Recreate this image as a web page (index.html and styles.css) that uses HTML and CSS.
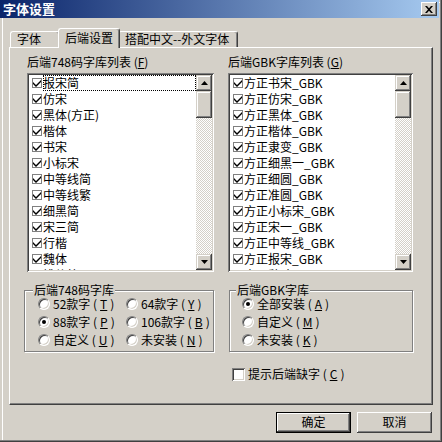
FILE: index.html
```html
<!DOCTYPE html>
<html lang="zh-CN">
<head>
  <meta charset="UTF-8" />
  <title>字体设置</title>
  <link rel="stylesheet" href="styles.css">
</head>
<body>
  <div class="window">
    <div class="titlebar">
      <span class="title">字体设置</span>
      <span class="close">
        <svg width="8" height="7" viewBox="0 0 8 7"><path d="M0 0h2l2 2.2L6 0h2L5 3.5 8 7H6L4 4.8 2 7H0l3-3.5z" fill="#000"/></svg>
      </span>
    </div>

    <div class="body">
      <div class="tabs">
        <div class="tab tab-font">字体</div>
        <div class="tab tab-back active">后端设置</div>
        <div class="tab tab-mix">搭配中文--外文字体</div>
      </div>

      <div class="panel">
        <div class="lists">
          <div class="col col-left">
            <div class="label">后端748码字库列表 (<u>F</u>)</div>
            <div class="listbox">
              <div class="items">
                <div class="item focus"><span class="cb"><svg width="8" height="8" viewBox="0 0 8 8"><path d="M0 3l3 3 5-5v2L3 8 0 5z" fill="#000"/></svg></span><span class="txt">报宋简</span></div>
                <div class="item"><span class="cb"><svg width="8" height="8" viewBox="0 0 8 8"><path d="M0 3l3 3 5-5v2L3 8 0 5z" fill="#000"/></svg></span><span class="txt">仿宋</span></div>
                <div class="item"><span class="cb"><svg width="8" height="8" viewBox="0 0 8 8"><path d="M0 3l3 3 5-5v2L3 8 0 5z" fill="#000"/></svg></span><span class="txt">黑体(方正)</span></div>
                <div class="item"><span class="cb"><svg width="8" height="8" viewBox="0 0 8 8"><path d="M0 3l3 3 5-5v2L3 8 0 5z" fill="#000"/></svg></span><span class="txt">楷体</span></div>
                <div class="item"><span class="cb"><svg width="8" height="8" viewBox="0 0 8 8"><path d="M0 3l3 3 5-5v2L3 8 0 5z" fill="#000"/></svg></span><span class="txt">书宋</span></div>
                <div class="item"><span class="cb"><svg width="8" height="8" viewBox="0 0 8 8"><path d="M0 3l3 3 5-5v2L3 8 0 5z" fill="#000"/></svg></span><span class="txt">小标宋</span></div>
                <div class="item"><span class="cb"><svg width="8" height="8" viewBox="0 0 8 8"><path d="M0 3l3 3 5-5v2L3 8 0 5z" fill="#000"/></svg></span><span class="txt">中等线简</span></div>
                <div class="item"><span class="cb"><svg width="8" height="8" viewBox="0 0 8 8"><path d="M0 3l3 3 5-5v2L3 8 0 5z" fill="#000"/></svg></span><span class="txt">中等线繁</span></div>
                <div class="item"><span class="cb"><svg width="8" height="8" viewBox="0 0 8 8"><path d="M0 3l3 3 5-5v2L3 8 0 5z" fill="#000"/></svg></span><span class="txt">细黑简</span></div>
                <div class="item"><span class="cb"><svg width="8" height="8" viewBox="0 0 8 8"><path d="M0 3l3 3 5-5v2L3 8 0 5z" fill="#000"/></svg></span><span class="txt">宋三简</span></div>
                <div class="item"><span class="cb"><svg width="8" height="8" viewBox="0 0 8 8"><path d="M0 3l3 3 5-5v2L3 8 0 5z" fill="#000"/></svg></span><span class="txt">行楷</span></div>
                <div class="item"><span class="cb"><svg width="8" height="8" viewBox="0 0 8 8"><path d="M0 3l3 3 5-5v2L3 8 0 5z" fill="#000"/></svg></span><span class="txt">魏体</span></div>
                <div class="item"><span class="cb"><svg width="8" height="8" viewBox="0 0 8 8"><path d="M0 3l3 3 5-5v2L3 8 0 5z" fill="#000"/></svg></span><span class="txt">姚体简</span></div>
              </div>
              <div class="scrollbar">
                <div class="sb-btn"><svg width="7" height="4" viewBox="0 0 7 4"><path d="M3.5 0L7 4H0z" fill="#000"/></svg></div>
                <div class="thumb"></div>
                <div class="track"></div>
                <div class="sb-btn"><svg width="7" height="4" viewBox="0 0 7 4"><path d="M0 0h7L3.5 4z" fill="#000"/></svg></div>
              </div>
            </div>
          </div>

          <div class="col col-right">
            <div class="label">后端GBK字库列表 (<u>G</u>)</div>
            <div class="listbox">
              <div class="items">
                <div class="item"><span class="cb"><svg width="8" height="8" viewBox="0 0 8 8"><path d="M0 3l3 3 5-5v2L3 8 0 5z" fill="#000"/></svg></span><span class="txt">方正书宋_GBK</span></div>
                <div class="item"><span class="cb"><svg width="8" height="8" viewBox="0 0 8 8"><path d="M0 3l3 3 5-5v2L3 8 0 5z" fill="#000"/></svg></span><span class="txt">方正仿宋_GBK</span></div>
                <div class="item"><span class="cb"><svg width="8" height="8" viewBox="0 0 8 8"><path d="M0 3l3 3 5-5v2L3 8 0 5z" fill="#000"/></svg></span><span class="txt">方正黑体_GBK</span></div>
                <div class="item"><span class="cb"><svg width="8" height="8" viewBox="0 0 8 8"><path d="M0 3l3 3 5-5v2L3 8 0 5z" fill="#000"/></svg></span><span class="txt">方正楷体_GBK</span></div>
                <div class="item"><span class="cb"><svg width="8" height="8" viewBox="0 0 8 8"><path d="M0 3l3 3 5-5v2L3 8 0 5z" fill="#000"/></svg></span><span class="txt">方正隶变_GBK</span></div>
                <div class="item"><span class="cb"><svg width="8" height="8" viewBox="0 0 8 8"><path d="M0 3l3 3 5-5v2L3 8 0 5z" fill="#000"/></svg></span><span class="txt">方正细黑一_GBK</span></div>
                <div class="item"><span class="cb"><svg width="8" height="8" viewBox="0 0 8 8"><path d="M0 3l3 3 5-5v2L3 8 0 5z" fill="#000"/></svg></span><span class="txt">方正细圆_GBK</span></div>
                <div class="item"><span class="cb"><svg width="8" height="8" viewBox="0 0 8 8"><path d="M0 3l3 3 5-5v2L3 8 0 5z" fill="#000"/></svg></span><span class="txt">方正准圆_GBK</span></div>
                <div class="item"><span class="cb"><svg width="8" height="8" viewBox="0 0 8 8"><path d="M0 3l3 3 5-5v2L3 8 0 5z" fill="#000"/></svg></span><span class="txt">方正小标宋_GBK</span></div>
                <div class="item"><span class="cb"><svg width="8" height="8" viewBox="0 0 8 8"><path d="M0 3l3 3 5-5v2L3 8 0 5z" fill="#000"/></svg></span><span class="txt">方正宋一_GBK</span></div>
                <div class="item"><span class="cb"><svg width="8" height="8" viewBox="0 0 8 8"><path d="M0 3l3 3 5-5v2L3 8 0 5z" fill="#000"/></svg></span><span class="txt">方正中等线_GBK</span></div>
                <div class="item"><span class="cb"><svg width="8" height="8" viewBox="0 0 8 8"><path d="M0 3l3 3 5-5v2L3 8 0 5z" fill="#000"/></svg></span><span class="txt">方正报宋_GBK</span></div>
                <div class="item"><span class="cb"><svg width="8" height="8" viewBox="0 0 8 8"><path d="M0 3l3 3 5-5v2L3 8 0 5z" fill="#000"/></svg></span><span class="txt">方正魏碑_GBK</span></div>
              </div>
              <div class="scrollbar">
                <div class="sb-btn"><svg width="7" height="4" viewBox="0 0 7 4"><path d="M3.5 0L7 4H0z" fill="#000"/></svg></div>
                <div class="thumb"></div>
                <div class="track"></div>
                <div class="sb-btn"><svg width="7" height="4" viewBox="0 0 7 4"><path d="M0 0h7L3.5 4z" fill="#000"/></svg></div>
              </div>
            </div>
          </div>
        </div>

        <div class="groups">
          <div class="group group-748">
            <span class="legend">后端748码字库</span>
            <div class="radios two">
              <div class="opt"><span class="radio"></span>52款字 (<u>T</u>)</div>
              <div class="opt"><span class="radio"></span>64款字 (<u>Y</u>)</div>
              <div class="opt"><span class="radio on"></span>88款字 (<u>P</u>)</div>
              <div class="opt"><span class="radio"></span>106款字 (<u>B</u>)</div>
              <div class="opt"><span class="radio"></span>自定义 (<u>U</u>)</div>
              <div class="opt"><span class="radio"></span>未安装 (<u>N</u>)</div>
            </div>
          </div>

          <div class="right-col">
            <div class="group group-gbk">
              <span class="legend">后端GBK字库</span>
              <div class="radios">
                <div class="opt"><span class="radio on"></span>全部安装 (<u>A</u>)</div>
                <div class="opt"><span class="radio"></span>自定义 (<u>M</u>)</div>
                <div class="opt"><span class="radio"></span>未安装 (<u>K</u>)</div>
              </div>
            </div>
            <div class="check-row"><span class="box"></span>提示后端缺字 (<u>C</u>)</div>
          </div>
        </div>
      </div>

      <div class="buttons">
        <div class="btn default">确定</div>
        <div class="btn">取消</div>
      </div>
    </div>
  </div>
</body>
</html>
```

FILE: styles.css
```css
* { box-sizing: border-box; }
body { margin: 0; font-family: "Noto Sans CJK SC", "Liberation Sans", sans-serif; font-size: 12px; color: #000; }
u { text-decoration: underline; text-underline-offset: 1px; }

.window { width: 442px; height: 442px; background: #d4d0c8; display: flex; flex-direction: column;
  box-shadow: inset -1px -1px #404040, inset -2px -2px #808080, inset 2px 2px #d4d0c8, inset 3px 3px #fff; }

.titlebar { height: 18px; margin-right: 3px; padding: 0 2px 0 3px; display: flex; align-items: center; justify-content: space-between;
  background: linear-gradient(to right, #0a246a, #a6caf0); }
.title { color: #fff; font-weight: bold; font-size: 13px; line-height: 18px; }
.close { width: 16px; height: 14px; display: flex; align-items: center; justify-content: center; background: #d4d0c8;
  box-shadow: inset -1px -1px #404040, inset 1px 1px #fff, inset -2px -2px #808080; }

.body { flex: 1; padding: 10px 9px 0 9px; }

.tabs { display: flex; align-items: flex-end; height: 19px; padding-left: 1px; }
.tab { height: 16px; line-height: 14px; padding-left: 6px; white-space: nowrap; background: #d4d0c8;
  border: 1px solid; border-bottom: 0; border-color: #fff #404040 #fff #fff; border-radius: 3px 3px 0 0;
  box-shadow: inset -1px 0 #808080; }
.tab-font { width: 50px; }
.tab-back { width: 62px; }
.tab-mix { width: 120px; }
.tab.active { height: 20px; line-height: 17px; margin: 0 -2px -1px; padding-left: 6px; position: relative; z-index: 1; }

.panel { height: 358px; padding: 6px 18px 0 17px; border: 1px solid; border-color: #fff #404040 #404040 #fff;
  box-shadow: inset -1px -1px #808080; }

.lists { display: flex; gap: 14px; }
.col-left { width: 187px; }
.col-right { width: 185px; }
.label { line-height: 16px; margin-bottom: 3px; white-space: nowrap; }

.listbox { height: 199px; padding: 2px; display: flex; background: #fff;
  box-shadow: inset 1px 1px #808080, inset -1px -1px #fff, inset 2px 2px #404040, inset -2px -2px #d4d0c8; }
.items { flex: 1; overflow: hidden; }
.item { display: flex; align-items: center; height: 16px; padding-left: 3px; }
.cb { width: 10px; height: 10px; flex: none; border: 1px solid #808080; background: #fff; display: flex; align-items: center; justify-content: center; }
.cb svg { display: block; }
.txt { flex: 1; margin-left: 1px; line-height: 16px; height: 16px; white-space: nowrap; }
.item.focus .txt { outline: 1px dotted #000; outline-offset: -1px; }

.scrollbar { width: 16px; flex: none; display: flex; flex-direction: column;
  background: repeating-conic-gradient(#d4d0c8 0 25%, #fff 0 50%) 0 0 / 2px 2px; }
.sb-btn, .thumb { background: #d4d0c8; box-shadow: inset -1px -1px #404040, inset 1px 1px #d4d0c8, inset -2px -2px #808080, inset 2px 2px #fff; }
.sb-btn { height: 16px; display: flex; align-items: center; justify-content: center; }
.thumb { height: 27px; }
.track { flex: 1; }

.groups { display: flex; margin-top: 18px; }
.group { position: relative; height: 62px; border: 1px solid #808080; box-shadow: 1px 1px 0 #fff, inset 1px 1px 0 #fff; padding-top: 4px; }
.group-748 { width: 190px; margin-left: -3px; padding-left: 13px; }
.right-col { width: 184px; margin-left: 15px; }
.group-gbk { padding-left: 12px; }
.legend { position: absolute; top: -8px; left: 8px; padding: 0 1px; line-height: 14px; background: #d4d0c8; white-space: nowrap; }
.group-gbk .legend { left: 6px; }

.radios { display: grid; grid-auto-rows: 18px; }
.radios.two { grid-template-columns: 88px auto; }
.opt { display: flex; align-items: center; gap: 3px; line-height: 14px; white-space: nowrap; }
.radio { width: 12px; height: 12px; flex: none; border-radius: 50%; position: relative; background: #fff;
  border: 1px solid; border-color: #808080 #fff #fff #808080; box-shadow: inset 1px 1px #404040, inset -1px -1px #d4d0c8; }
.radio.on::after { content: ""; position: absolute; left: 3px; top: 3px; width: 4px; height: 4px; border-radius: 50%; background: #000; }

.check-row { display: flex; align-items: center; gap: 3px; height: 16px; line-height: 14px; margin: 14px 0 0 3px; white-space: nowrap; }
.box { width: 13px; height: 13px; flex: none; background: #fff;
  box-shadow: inset 1px 1px #808080, inset -1px -1px #fff, inset 2px 2px #404040, inset -2px -2px #d4d0c8; }

.buttons { display: flex; justify-content: flex-end; gap: 6px; margin-top: 7px; padding-right: 1px; }
.btn { width: 75px; height: 21px; line-height: 19px; text-align: center; background: #d4d0c8;
  box-shadow: inset -1px -1px #404040, inset 1px 1px #fff, inset -2px -2px #808080; }
.btn.default { border: 1px solid #000; line-height: 17px; }
```
